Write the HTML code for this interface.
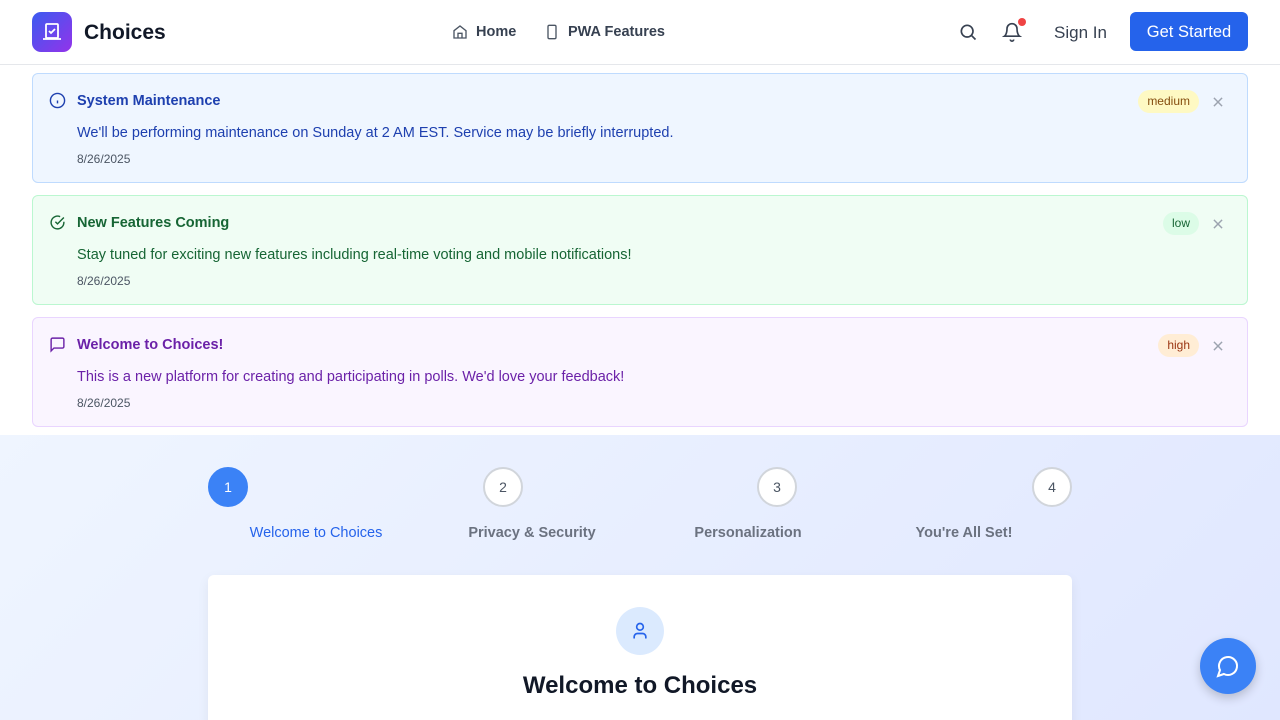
<!DOCTYPE html>
<html><head><meta charset="utf-8"><style>
*{box-sizing:border-box;margin:0;padding:0}
html,body{width:1280px;height:720px;overflow:hidden}
body{font-family:"Liberation Sans",sans-serif;background:#fff;position:relative}
.hdr{height:65px;border-bottom:1px solid #e5e7eb;position:relative;background:#fff}
.logo{position:absolute;left:32px;top:12px;width:40px;height:40px;border-radius:9px;background:linear-gradient(135deg,#3b5bf0,#9333ea)}
.brand{position:absolute;left:84px;top:21px;font-size:21px;font-weight:bold;color:#111827}
.nav{position:absolute;top:24px;font-size:14.5px;color:#374151;font-weight:bold}
.signin{position:absolute;left:1054px;top:23px;font-size:17px;color:#374151}
.gs{position:absolute;left:1130px;top:12px;width:118px;height:39px;border-radius:6px;background:#2563eb;color:#fff;font-size:16.5px;line-height:41px;text-align:center}
.al{position:absolute;left:32px;width:1216px;height:110px;border:1px solid;border-radius:6px}
.al .t{position:absolute;left:44px;top:19px;font-size:14.5px;font-weight:bold}
.al .m{position:absolute;left:44px;top:51px;font-size:14.5px}
.al .d{position:absolute;left:44px;top:78px;font-size:12px;color:#4b5563}
.al svg.i{position:absolute;left:16px;top:18px}
.badge{position:absolute;top:16px;height:23px;border-radius:12px;font-size:12px;line-height:23px;padding:0 9px}
.x{position:absolute;right:22px;top:21px}
.sec{position:absolute;top:435px;left:0;width:1280px;height:285px;background:linear-gradient(135deg,#eff5ff,#e0e7ff);overflow:hidden}
.c{position:absolute;top:32px;width:40px;height:40px;border-radius:50%;border:2px solid #d1d5db;background:#fff;text-align:center;line-height:37px;font-size:14px;color:#4b5563}
.lb{position:absolute;top:90px;font-size:14.5px;color:#6b7280;font-weight:bold;transform:translateX(-50%);white-space:nowrap}
.card{position:absolute;left:208px;top:140px;width:864px;height:160px;background:#fff;border-radius:6px;box-shadow:0 4px 12px rgba(0,0,0,.06)}
</style></head><body>
<div class="hdr">
<div class="logo"><svg width="40" height="40" viewBox="0 0 40 40" fill="none" stroke="#fff" stroke-width="1.8"><rect x="14" y="12" width="12" height="14" rx="1"/><path d="M11 27h18M17 19l2 2 4-4"/></svg></div>
<div class="brand">Choices</div>
<svg style="position:absolute;left:452px;top:24px" width="16" height="16" viewBox="0 0 24 24" fill="none" stroke="#4b5563" stroke-width="2"><path d="M3 10l9-7 9 7v11H3z M9 21v-7h6v7"/></svg>
<div class="nav" style="left:476px">Home</div>
<svg style="position:absolute;left:544px;top:24px" width="16" height="16" viewBox="0 0 24 24" fill="none" stroke="#4b5563" stroke-width="2"><rect x="6" y="2" width="12" height="20" rx="2"/><path d="M12 18h.01"/></svg>
<div class="nav" style="left:568px">PWA Features</div>
<svg style="position:absolute;left:958px;top:22px" width="20" height="20" viewBox="0 0 24 24" fill="none" stroke="#374151" stroke-width="2"><circle cx="11" cy="11" r="7"/><path d="M21 21l-5-5"/></svg>
<svg style="position:absolute;left:1002px;top:22px" width="20" height="20" viewBox="0 0 24 24" fill="none" stroke="#374151" stroke-width="2"><path d="M6 8a6 6 0 0112 0c0 7 3 9 3 9H3s3-2 3-9M10 21a2 2 0 004 0"/></svg>
<div style="position:absolute;left:1018px;top:18px;width:8px;height:8px;border-radius:50%;background:#ef4444"></div>
<div class="signin">Sign In</div>
<div class="gs">Get Started</div>
</div>

<div class="al" style="top:73px;background:#eff6ff;border-color:#bfdbfe;color:#1e40af">
<svg class="i" width="17" height="17" viewBox="0 0 24 24" fill="none" stroke="#1e40af" stroke-width="2"><circle cx="12" cy="12" r="10"/><path d="M12 16v-4M12 8h.01"/></svg>
<div class="t">System Maintenance</div><div class="m">We'll be performing maintenance on Sunday at 2 AM EST. Service may be briefly interrupted.</div><div class="d">8/26/2025</div>
<div class="badge" style="right:48px;background:#fef9c3;color:#854d0e">medium</div>
<svg class="x" width="14" height="14" viewBox="0 0 24 24" stroke="#9ca3af" stroke-width="2.5"><path d="M5 5l14 14M19 5L5 19"/></svg>
</div>
<div class="al" style="top:195px;background:#f0fdf4;border-color:#bbf7d0;color:#166534">
<svg class="i" width="17" height="17" viewBox="0 0 24 24" fill="none" stroke="#166534" stroke-width="2"><path d="M21 11v1a9 9 0 11-5.3-8.2"/><path d="M9 11l3 3 9-9"/></svg>
<div class="t">New Features Coming</div><div class="m">Stay tuned for exciting new features including real-time voting and mobile notifications!</div><div class="d">8/26/2025</div>
<div class="badge" style="right:48px;background:#dcfce7;color:#166534">low</div>
<svg class="x" width="14" height="14" viewBox="0 0 24 24" stroke="#9ca3af" stroke-width="2.5"><path d="M5 5l14 14M19 5L5 19"/></svg>
</div>
<div class="al" style="top:317px;background:#faf5ff;border-color:#e9d5ff;color:#6b21a8">
<svg class="i" width="17" height="17" viewBox="0 0 24 24" fill="none" stroke="#6b21a8" stroke-width="2"><path d="M21 15a2 2 0 01-2 2H7l-4 4V5a2 2 0 012-2h14a2 2 0 012 2z"/></svg>
<div class="t">Welcome to Choices!</div><div class="m">This is a new platform for creating and participating in polls. We'd love your feedback!</div><div class="d">8/26/2025</div>
<div class="badge" style="right:48px;background:#ffedd5;color:#9a3412">high</div>
<svg class="x" width="14" height="14" viewBox="0 0 24 24" stroke="#9ca3af" stroke-width="2.5"><path d="M5 5l14 14M19 5L5 19"/></svg>
</div>

<div class="sec">
<div class="c" style="left:208px;background:#3b82f6;border-color:#3b82f6;color:#fff">1</div>
<div class="c" style="left:483px">2</div>
<div class="c" style="left:757px">3</div>
<div class="c" style="left:1032px">4</div>
<div class="lb" style="left:316px;color:#2563eb;font-weight:normal">Welcome to Choices</div>
<div class="lb" style="left:532px">Privacy &amp; Security</div>
<div class="lb" style="left:748px">Personalization</div>
<div class="lb" style="left:964px">You're All Set!</div>
<div class="card">
<div style="position:absolute;left:408px;top:32px;width:48px;height:48px;border-radius:50%;background:#dbeafe"></div>
<svg style="position:absolute;left:422px;top:46px" width="20" height="20" viewBox="0 0 24 24" fill="none" stroke="#2563eb" stroke-width="2"><circle cx="12" cy="7" r="4"/><path d="M5 21v-2a4 4 0 014-4h6a4 4 0 014 4v2"/></svg>
<div style="position:absolute;left:0;width:864px;top:97px;text-align:center;font-size:24px;font-weight:bold;color:#111827">Welcome to Choices</div>
</div>
</div>
<div style="position:absolute;left:1200px;top:638px;width:56px;height:56px;border-radius:50%;background:#3b82f6;box-shadow:0 4px 10px rgba(0,0,0,.2)"><svg style="margin:16px" width="24" height="24" viewBox="0 0 24 24" fill="none" stroke="#fff" stroke-width="2"><path d="M7.9 20A9 9 0 104 16.1L2 22z"/></svg></div>
</body></html>
